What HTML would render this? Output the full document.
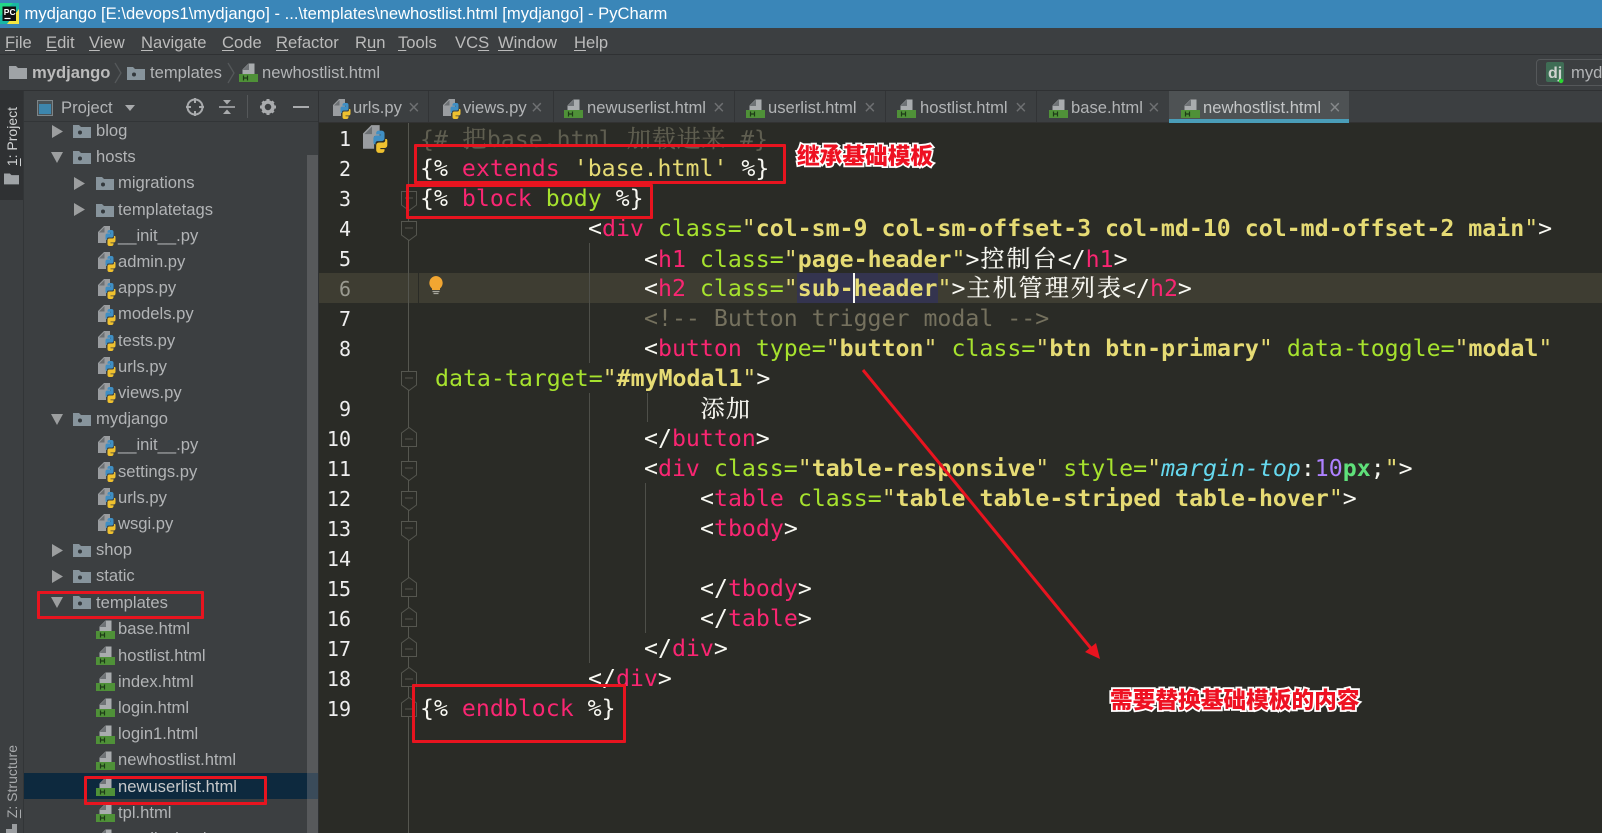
<!DOCTYPE html>
<html lang="zh"><head><meta charset="utf-8"><title>PyCharm</title>
<style>
html,body{margin:0;padding:0;background:#2a2b26}
#p{position:relative;width:1602px;height:833px;overflow:hidden;background:#2a2b26;font-family:"Liberation Sans","Noto Sans CJK SC",sans-serif;font-size:16.6px;color:#b4b6b8}
.a{position:absolute;white-space:pre}
.bar{position:absolute}
.m{position:absolute;top:29px;line-height:27px;color:#bbb}
.m u{text-underline-offset:2px}
.r{position:absolute;line-height:26px;left:118px;white-space:pre;color:#b2b4b6}
.r.d{left:96px}
.t{position:absolute;top:95px;line-height:26px;white-space:pre;color:#b2b4b6}
.x{position:absolute;top:95px;line-height:26px;color:#6e7072;font-size:20px}
.c{position:absolute;left:420px;height:30px;line-height:30px;white-space:pre;font-family:"DejaVu Sans Mono","Liberation Mono","Noto Serif CJK SC",monospace;font-size:23.2px;letter-spacing:.012px;color:#f8f8f2}
.n{position:absolute;width:40px;left:311px;text-align:right;height:30px;line-height:30px;font-family:"DejaVu Sans Mono",monospace;font-size:20px;color:#eee}
.p{color:#f92672}.g{color:#a6e22e}.y{color:#e6db74}.b{color:#e6db74;font-weight:bold}
.k{color:#66d9ef;font-style:italic}.u{color:#ae81ff}.e{color:#5f5e50}.cm{color:#75715e}
.z{display:inline-block;font-family:"Noto Serif CJK SC","Noto Sans CJK SC",serif;width:25.3px;text-align:center;font-size:24px;line-height:28px;-webkit-text-stroke:.2px currentColor}
.w .z{width:26.1px}
.e .z{width:24.9px}
.v{position:absolute;writing-mode:vertical-rl;transform:rotate(180deg);font-size:14px;color:#bbb;white-space:pre;left:4px}
.box{position:absolute;border:3px solid #e8141f;box-sizing:border-box;border-radius:1px}
.ann{position:absolute;font-family:"Noto Sans CJK SC",sans-serif;font-weight:900;font-size:22.7px;line-height:30px;color:#ee1122;-webkit-text-stroke:3.5px #fff;paint-order:stroke fill;white-space:pre}
svg{position:absolute;left:0;top:0}
</style></head><body><div id="p">
<!-- chrome backgrounds -->
<div class="bar" style="left:0;top:0;width:1602px;height:28px;background:#3a86b8"></div>
<div class="bar" style="left:0;top:28px;width:1602px;height:26px;background:#3c3f41"></div>
<div class="bar" style="left:0;top:54px;width:1602px;height:37px;background:#3c3f41;border-top:1px solid #2f3133;border-bottom:1px solid #2f3133;box-sizing:border-box"></div>
<div class="bar" style="left:0;top:91px;width:24px;height:742px;background:#3c3f41;border-right:1px solid #323537;box-sizing:border-box"></div>
<div class="bar" style="left:0;top:91px;width:23px;height:109px;background:#2f3133"></div>
<div class="bar" style="left:24px;top:91px;width:295px;height:742px;background:#3c3f41"></div>
<div class="bar" style="left:24px;top:121px;width:295px;height:1px;background:#323537"></div>
<div class="bar" style="left:318px;top:91px;width:1px;height:742px;background:#2f3133"></div>
<div class="bar" style="left:307px;top:155px;width:11px;height:678px;background:#57595b"></div>
<div class="bar" style="left:24px;top:773px;width:283px;height:26px;background:#0d293e"></div>
<div class="bar" style="left:307px;top:773px;width:11px;height:26px;background:#3a4b5a"></div>
<div class="bar" style="left:319px;top:91px;width:1283px;height:32px;background:#3c3f41;border-bottom:1px solid #323232;box-sizing:border-box"></div>
<div class="bar" style="left:1169px;top:91px;width:180px;height:28px;background:#4e5254"></div>
<div class="bar" style="left:1169px;top:119px;width:180px;height:4px;background:#4a9db8"></div>
<div class="bar" style="left:428px;top:91px;width:1px;height:31px;background:#323436"></div>
<div class="bar" style="left:553px;top:91px;width:1px;height:31px;background:#323436"></div>
<div class="bar" style="left:734px;top:91px;width:1px;height:31px;background:#323436"></div>
<div class="bar" style="left:885px;top:91px;width:1px;height:31px;background:#323436"></div>
<div class="bar" style="left:1036px;top:91px;width:1px;height:31px;background:#323436"></div>
<div class="bar" style="left:1536px;top:59px;width:80px;height:27px;border:1px solid #55585a;border-radius:4px;box-sizing:border-box"></div>
<!-- editor line highlights -->
<div class="bar" style="left:319px;top:273px;width:1283px;height:30px;background:#3e3d32"></div>
<div class="bar" style="left:418px;top:273px;width:1px;height:30px;background:#2a2b26"></div>
<div class="bar" style="left:797px;top:273px;width:141px;height:30px;background:#34344f"></div>
<div class="bar" style="left:408px;top:123px;width:1px;height:710px;background:#55564f"></div>
<div class="bar" style="left:589px;top:243px;width:1px;height:120px;background:#4e4f49"></div>
<div class="bar" style="left:589px;top:393px;width:1px;height:270px;background:#4e4f49"></div>
<div class="bar" style="left:647px;top:393px;width:1px;height:29px;background:#4e4f49"></div>
<div class="bar" style="left:645px;top:483px;width:1px;height:150px;background:#4e4f49"></div>

<!-- icons -->
<svg width="1602" height="833" viewBox="0 0 1602 833">
<defs>
<symbol id="h" viewBox="0 0 19 19"><path d="M3.500 11.500V6.500L9.500 .5H15.500V11.500z" fill="#a9acae"/><path d="M3.500 7L10 .5V7z" fill="#6e7275"/><rect y="11" width="19" height="8" fill="#4f9138"/><path d="M4.500 12.500v5M8.500 12.500v5M4.500 15h4" stroke="#1d3a17" stroke-width="1.200" fill="none"/></symbol>
<symbol id="py" viewBox="0 0 18 20"><path d="M0 6L6 0h6v8H8v9H0z" fill="#9a9da0"/><path d="M1 6.500L6.500 1v5.500z" fill="#6c7073"/><path d="M7.500 13V9.500a2 2 0 0 1 2-2h3v-.8h-3V5.500a2 2 0 0 1 2-1.500h2a2 2 0 0 1 2 2v3.500a2 2 0 0 1-2 2h-3a1.500 1.500 0 0 0-1.500 1.500V14H9a1.500 1.500 0 0 1-1.500-1z" fill="#3f8fc4"/><path d="M17.500 11v3.500a2 2 0 0 1-2 2h-3v.8h3v1a2 2 0 0 1-2 1.700h-2a2 2 0 0 1-2-2V14.500a2 2 0 0 1 2-2h3a1.500 1.500 0 0 0 1.500-1.500V10h1a1.500 1.500 0 0 1 .5 1z" fill="#efc12f"/></symbol>
<symbol id="f" viewBox="0 0 18 14"><path d="M0 1h6l2 2h10v11H0z" fill="#87949c"/><circle cx="7" cy="8.500" r="2" fill="#33393d"/></symbol>
<symbol id="fp" viewBox="0 0 18 14"><path d="M0 1h7l2 2h9v11H0z" fill="#9fa3a6"/></symbol>
<symbol id="fd" viewBox="0 0 16 20"><path d="M.500.500h15v13.500L8 19.500.500 14z" fill="#2a2b26" stroke="#55564f"/><path d="M4 7h8" stroke="#55564f"/></symbol>
<symbol id="fu" viewBox="0 0 16 20"><path d="M.500 19.500h15V6L8 .500.500 6z" fill="#2a2b26" stroke="#55564f"/><path d="M4 12h8" stroke="#55564f"/></symbol>
</defs>
<!-- title logo -->
<rect x="0" y="3" width="19" height="21" fill="#19b7a4"/><path d="M0 3h13L0 16z" fill="#21d789"/><path d="M19 24H7L19 9z" fill="#f5e642"/><rect x="2.500" y="6.500" width="13.500" height="14.500" fill="#111"/><path d="M4.500 18.500h6" stroke="#fff" stroke-width="1.200"/>
<text x="3.800" y="15" font-family="Liberation Sans" font-weight="bold" font-size="8.500" fill="#fff">PC</text>
<!-- nav -->
<use href="#fp" x="9" y="65" width="18" height="14"/>
<path d="M115 63l6 10-6 10M228 63l6 10-6 10" fill="none" stroke="#55585a" stroke-width="1.300"/>
<use href="#f" x="127" y="66" width="18" height="14"/>
<use href="#h" x="239" y="63" width="19" height="19"/>
<!-- dj -->
<rect x="1546" y="62" width="18" height="20" rx="2" fill="#3f6d55"/><text x="1548" y="78" font-family="Liberation Sans" font-weight="bold" font-size="16" fill="#cfd3d0">dj</text><circle cx="1561" cy="81" r="2.200" fill="#29d92e"/>
<!-- left stripe folder -->
<use href="#fp" x="4" y="172" width="15" height="13"/>
<rect x="12" y="824" width="5" height="5" fill="#9a9da0"/><rect x="6" y="829" width="11" height="4" fill="#9a9da0"/>
<!-- panel header -->
<rect x="37.500" y="100.500" width="15" height="15" fill="#4a5357" stroke="#7e8689"/><rect x="39" y="104" width="12" height="10" fill="#3d86ad"/>
<path d="M125 105h10l-5 6z" fill="#a8aaac"/>
<circle cx="195" cy="107" r="7.500" fill="none" stroke="#a9abad" stroke-width="2"/><path d="M195 98v5M195 111v5M186 107h5M199 107h5" stroke="#a9abad" stroke-width="2"/>
<path d="M219 107h16" stroke="#a9abad" stroke-width="1.600"/><path d="M223 100h8l-4 4.500zM223 114h8l-4-4.500z" fill="#a9abad"/>
<rect x="247" y="95" width="1" height="23" fill="#55585a"/>
<circle cx="268" cy="107" r="5" fill="none" stroke="#a9abad" stroke-width="3.500"/><path d="M268 99v3M268 112v3M260 107h3M273 107h3M262.500 101.500l2 2M271.500 110.500l2 2M273.500 101.500l-2 2M264.500 110.500l-2 2" stroke="#a9abad" stroke-width="3"/>
<path d="M293 107h16" stroke="#a9abad" stroke-width="2"/>
<!-- tree arrows -->
<path d="M52 125l11 6.500-11 6.500zM74 177l11 6.500-11 6.500zM74 203l11 6.500-11 6.500zM52 544l11 6.500-11 6.500zM52 570l11 6.500-11 6.500z" fill="#9c9e9f"/>
<path d="M51 152h12l-6 11zM51 414h12l-6 11zM51 597h12l-6 11z" fill="#9c9e9f"/>
<!-- tree folders -->
<use href="#f" x="73" y="124" width="18" height="14"/><use href="#f" x="73" y="150" width="18" height="14"/>
<use href="#f" x="96" y="176" width="18" height="14"/><use href="#f" x="96" y="203" width="18" height="14"/>
<use href="#f" x="73" y="412" width="18" height="14"/><use href="#f" x="73" y="543" width="18" height="14"/>
<use href="#f" x="73" y="569" width="18" height="14"/><use href="#f" x="73" y="595" width="18" height="14"/>
<!-- tree py -->
<use href="#py" x="98" y="226" width="18" height="20"/><use href="#py" x="98" y="252" width="18" height="20"/>
<use href="#py" x="98" y="279" width="18" height="20"/><use href="#py" x="98" y="305" width="18" height="20"/>
<use href="#py" x="98" y="331" width="18" height="20"/><use href="#py" x="98" y="357" width="18" height="20"/>
<use href="#py" x="98" y="383" width="18" height="20"/><use href="#py" x="98" y="436" width="18" height="20"/>
<use href="#py" x="98" y="462" width="18" height="20"/><use href="#py" x="98" y="488" width="18" height="20"/>
<use href="#py" x="98" y="514" width="18" height="20"/>
<!-- tree html -->
<use href="#h" x="96" y="620" width="19" height="19"/><use href="#h" x="96" y="646" width="19" height="19"/>
<use href="#h" x="96" y="672" width="19" height="19"/><use href="#h" x="96" y="698" width="19" height="19"/>
<use href="#h" x="96" y="725" width="19" height="19"/><use href="#h" x="96" y="751" width="19" height="19"/>
<use href="#h" x="96" y="777" width="19" height="19"/><use href="#h" x="96" y="803" width="19" height="19"/>
<use href="#h" x="96" y="829" width="19" height="19"/>
<!-- tabs -->
<use href="#py" x="333" y="99" width="18" height="20"/><use href="#py" x="443" y="99" width="18" height="20"/>
<use href="#h" x="564" y="99" width="19" height="19"/><use href="#h" x="746" y="99" width="19" height="19"/>
<use href="#h" x="897" y="99" width="19" height="19"/><use href="#h" x="1049" y="99" width="19" height="19"/>
<use href="#h" x="1181" y="99" width="19" height="19"/>
<!-- editor -->
<use href="#py" x="363" y="125" width="25" height="28"/>
<use href="#fd" x="401" y="191" width="16" height="20"/><use href="#fd" x="401" y="221" width="16" height="20"/>
<use href="#fd" x="401" y="371" width="16" height="20"/><use href="#fu" x="401" y="427" width="16" height="20"/>
<use href="#fd" x="401" y="461" width="16" height="20"/><use href="#fd" x="401" y="491" width="16" height="20"/>
<use href="#fd" x="401" y="521" width="16" height="20"/><use href="#fu" x="401" y="577" width="16" height="20"/>
<use href="#fu" x="401" y="607" width="16" height="20"/><use href="#fu" x="401" y="637" width="16" height="20"/>
<use href="#fu" x="401" y="667" width="16" height="20"/><use href="#fu" x="401" y="697" width="16" height="20"/>
<!-- bulb -->
<path d="M436 276a7 7 0 0 1 4 12.500v1.500h-8v-1.500a7 7 0 0 1 4-12.500z" fill="#f2a631"/><path d="M432.500 291.500h7M433.500 293.500h5" stroke="#a8a89e" stroke-width="1.300"/>
</svg>

<!-- title -->
<div class="a" style="left:24.500px;top:0;line-height:28px;color:#fff">mydjango [E:\devops1\mydjango] - ...\templates\newhostlist.html [mydjango] - PyCharm</div>
<!-- menu -->
<div class="m" style="left:5px"><u>F</u>ile</div>
<div class="m" style="left:46px"><u>E</u>dit</div>
<div class="m" style="left:89px"><u>V</u>iew</div>
<div class="m" style="left:141px"><u>N</u>avigate</div>
<div class="m" style="left:222px"><u>C</u>ode</div>
<div class="m" style="left:276px"><u>R</u>efactor</div>
<div class="m" style="left:355px">R<u>u</u>n</div>
<div class="m" style="left:398px"><u>T</u>ools</div>
<div class="m" style="left:455px">VC<u>S</u></div>
<div class="m" style="left:498px"><u>W</u>indow</div>
<div class="m" style="left:574px"><u>H</u>elp</div>
<!-- nav -->
<div class="a" style="left:32px;top:60px;line-height:26px;font-weight:bold;color:#bbb">mydjango</div>
<div class="a" style="left:150px;top:60px;line-height:26px;color:#b2b4b6">templates</div>
<div class="a" style="left:262px;top:60px;line-height:26px;color:#b2b4b6">newhostlist.html</div>
<div class="a" style="left:1571px;top:60px;line-height:26px;color:#b2b4b6">mydjango</div>
<div class="a" style="left:61px;top:95px;line-height:26px;color:#b2b4b6">Project</div>
<!-- stripe labels -->
<div class="v" style="top:107px;color:#d0d2d3"><u>1</u>: Project</div>
<div class="v" style="top:745px;color:#a9abad"><u>Z</u>: Structure</div>
<!-- tabs text -->
<div class="t" style="left:353px">urls.py</div><div class="x" style="left:408px">×</div>
<div class="t" style="left:463px">views.py</div><div class="x" style="left:531px">×</div>
<div class="t" style="left:587px">newuserlist.html</div><div class="x" style="left:713px">×</div>
<div class="t" style="left:768px">userlist.html</div><div class="x" style="left:864px">×</div>
<div class="t" style="left:920px">hostlist.html</div><div class="x" style="left:1015px">×</div>
<div class="t" style="left:1071px">base.html</div><div class="x" style="left:1148px">×</div>
<div class="t" style="left:1203px;color:#c4c6c7">newhostlist.html</div><div class="x" style="left:1329px;color:#85888a">×</div>
<!-- tree -->
<div class="r d" style="top:118px">blog</div>
<div class="r d" style="top:144.200px">hosts</div>
<div class="r" style="top:170.400px">migrations</div>
<div class="r" style="top:196.600px">templatetags</div>
<div class="r" style="top:222.800px">__init__.py</div>
<div class="r" style="top:249px">admin.py</div>
<div class="r" style="top:275.200px">apps.py</div>
<div class="r" style="top:301.400px">models.py</div>
<div class="r" style="top:327.600px">tests.py</div>
<div class="r" style="top:353.800px">urls.py</div>
<div class="r" style="top:380px">views.py</div>
<div class="r d" style="top:406.200px">mydjango</div>
<div class="r" style="top:432.400px">__init__.py</div>
<div class="r" style="top:458.600px">settings.py</div>
<div class="r" style="top:484.800px">urls.py</div>
<div class="r" style="top:511px">wsgi.py</div>
<div class="r d" style="top:537.200px">shop</div>
<div class="r d" style="top:563.400px">static</div>
<div class="r d" style="top:589.600px">templates</div>
<div class="r" style="top:615.800px">base.html</div>
<div class="r" style="top:642.500px">hostlist.html</div>
<div class="r" style="top:668.700px">index.html</div>
<div class="r" style="top:694.900px">login.html</div>
<div class="r" style="top:720.600px">login1.html</div>
<div class="r" style="top:747.300px">newhostlist.html</div>
<div class="r" style="top:773.500px;color:#c6c8ca">newuserlist.html</div>
<div class="r" style="top:799.700px">tpl.html</div>
<div class="r" style="top:825.900px">userlist.html</div>
<!-- line numbers -->
<div class="n" style="top:124px">1</div><div class="n" style="top:154px">2</div><div class="n" style="top:184px">3</div>
<div class="n" style="top:214px">4</div><div class="n" style="top:244px">5</div><div class="n" style="top:274px;color:#9a9a90">6</div>
<div class="n" style="top:304px">7</div><div class="n" style="top:334px">8</div><div class="n" style="top:394px">9</div>
<div class="n" style="top:424px">10</div><div class="n" style="top:454px">11</div><div class="n" style="top:484px">12</div>
<div class="n" style="top:514px">13</div><div class="n" style="top:544px">14</div><div class="n" style="top:574px">15</div>
<div class="n" style="top:604px">16</div><div class="n" style="top:634px">17</div><div class="n" style="top:664px">18</div>
<div class="n" style="top:694px">19</div>
<!-- code -->
<div class="c e" style="top:123px">{# <span class="z">把</span>base.html <span class="z">加</span><span class="z">载</span><span class="z">进</span><span class="z">来</span> #}</div>
<div class="c" style="top:154px">{% <span class="p">extends</span> <span class="y">'base.html'</span> %}</div>
<div class="c" style="top:184px">{% <span class="p">block</span> <span class="g">body</span> %}</div>
<div class="c" style="top:214px;left:588px">&lt;<span class="p">div</span> <span class="g">class=</span><span class="y">"</span><span class="b">col-sm-9 col-sm-offset-3 col-md-10 col-md-offset-2 main</span><span class="y">"</span>&gt;</div>
<div class="c w" style="top:243px;left:644px">&lt;<span class="p">h1</span> <span class="g">class=</span><span class="y">"</span><span class="b">page-header</span><span class="y">"</span>&gt;<span class="z">控</span><span class="z">制</span><span class="z">台</span>&lt;/<span class="p">h1</span>&gt;</div>
<div class="c w" style="top:272px;left:644px">&lt;<span class="p">h2</span> <span class="g">class=</span><span class="y">"</span><span class="b">sub-header</span><span class="y">"</span>&gt;<span class="z">主</span><span class="z">机</span><span class="z">管</span><span class="z">理</span><span class="z">列</span><span class="z">表</span>&lt;/<span class="p">h2</span>&gt;</div>
<div class="bar" style="left:853px;top:273px;width:2px;height:30px;background:#f8f8f2"></div>
<div class="c cm" style="top:304px;left:644px">&lt;!-- Button trigger modal --&gt;</div>
<div class="c" style="top:334px;left:644px">&lt;<span class="p">button</span> <span class="g">type=</span><span class="y">"</span><span class="b">button</span><span class="y">"</span> <span class="g">class=</span><span class="y">"</span><span class="b">btn btn-primary</span><span class="y">"</span> <span class="g">data-toggle=</span><span class="y">"</span><span class="b">modal</span><span class="y">"</span></div>
<div class="c" style="top:364px;left:435px"><span class="g">data-target=</span><span class="y">"</span><span class="b">#myModal1</span><span class="y">"</span>&gt;</div>
<div class="c" style="top:393px;left:700px"><span class="z">添</span><span class="z">加</span></div>
<div class="c" style="top:424px;left:644px">&lt;/<span class="p">button</span>&gt;</div>
<div class="c" style="top:454px;left:644px">&lt;<span class="p">div</span> <span class="g">class=</span><span class="y">"</span><span class="b">table-responsive</span><span class="y">"</span> <span class="g">style=</span><span class="y">"</span><span class="k">margin-top</span>:<span class="u">10</span><span style="color:#5fe07a;font-weight:bold">px</span>;<span class="y">"</span>&gt;</div>
<div class="c" style="top:484px;left:700px">&lt;<span class="p">table</span> <span class="g">class=</span><span class="y">"</span><span class="b">table table-striped table-hover</span><span class="y">"</span>&gt;</div>
<div class="c" style="top:514px;left:700px">&lt;<span class="p">tbody</span>&gt;</div>
<div class="c" style="top:574px;left:700px">&lt;/<span class="p">tbody</span>&gt;</div>
<div class="c" style="top:604px;left:700px">&lt;/<span class="p">table</span>&gt;</div>
<div class="c" style="top:634px;left:644px">&lt;/<span class="p">div</span>&gt;</div>
<div class="c" style="top:664px;left:588px">&lt;/<span class="p">div</span>&gt;</div>
<div class="c" style="top:694px">{% <span class="p">endblock</span> %}</div>
<!-- annotations -->
<div class="box" style="left:414px;top:144px;width:372px;height:40px"></div>
<div class="box" style="left:406px;top:184px;width:247px;height:35px"></div>
<div class="box" style="left:412px;top:684px;width:214px;height:59px"></div>
<div class="box" style="left:37px;top:591px;width:167px;height:28px"></div>
<div class="box" style="left:84px;top:776px;width:183px;height:29px"></div>
<svg width="1602" height="833" viewBox="0 0 1602 833" style="pointer-events:none">
<path d="M863 370L1094 652" stroke="#e8141f" stroke-width="3" fill="none"/>
<path d="M1100 659L1085 652L1096 643z" fill="#e8141f"/>
</svg>
<div class="ann" style="left:797px;top:140px">继承基础模板</div>
<div class="ann" style="left:1110px;top:684px">需要替换基础模板的内容</div>
</div></body></html>
